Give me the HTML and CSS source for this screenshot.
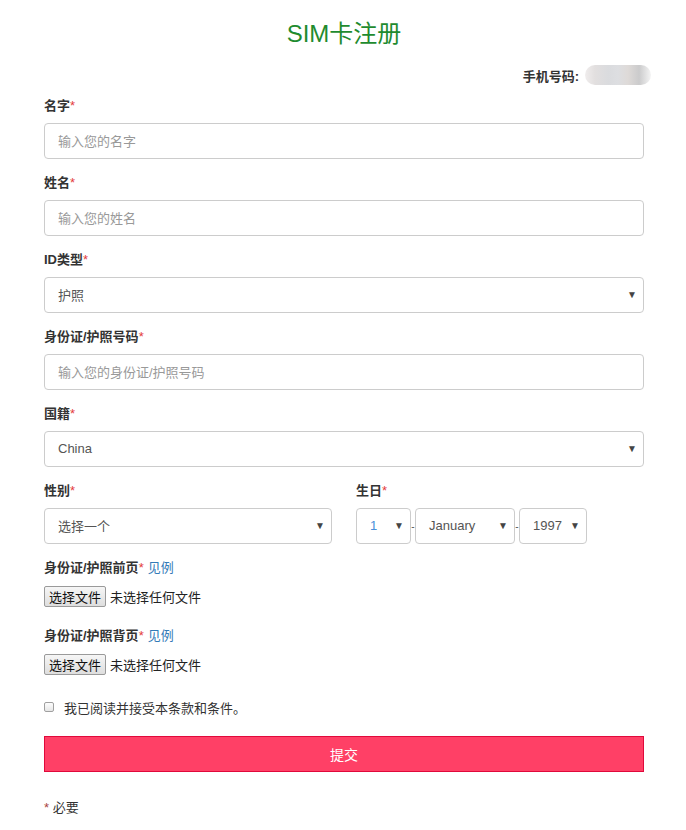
FILE: index.html
```html
<!DOCTYPE html>
<html lang="zh-CN">
<head>
<meta charset="utf-8">
<title>SIM卡注册</title>
<link rel="stylesheet" href="styles.css">
</head>
<body>
<div class="page">
  <h1 class="title">SIM卡注册</h1>
  <div class="phone-row">
    <span class="phone-label">手机号码:</span>
    <span class="phone-blur"></span>
  </div>

  <div class="group">
    <div class="label">名字<span class="req">*</span></div>
    <div class="input placeholder">输入您的名字</div>
  </div>
  <div class="group">
    <div class="label">姓名<span class="req">*</span></div>
    <div class="input placeholder">输入您的姓名</div>
  </div>
  <div class="group">
    <div class="label">ID类型<span class="req">*</span></div>
    <div class="input select"><span>护照</span><span class="arrow">▼</span></div>
  </div>
  <div class="group">
    <div class="label">身份证/护照号码<span class="req">*</span></div>
    <div class="input placeholder">输入您的身份证/护照号码</div>
  </div>
  <div class="group">
    <div class="label">国籍<span class="req">*</span></div>
    <div class="input select"><span>China</span><span class="arrow">▼</span></div>
  </div>
  <div class="group two-col">
    <div>
      <div class="label">性别<span class="req">*</span></div>
      <div class="input select"><span>选择一个</span><span class="arrow">▼</span></div>
    </div>
    <div>
      <div class="label">生日<span class="req">*</span></div>
      <div class="dob">
        <div class="input select day"><span class="day-val">1</span><span class="arrow">▼</span></div>
        <span class="dash">-</span>
        <div class="input select month"><span>January</span><span class="arrow">▼</span></div>
        <span class="dash">-</span>
        <div class="input select year"><span>1997</span><span class="arrow">▼</span></div>
      </div>
    </div>
  </div>
  <div class="group file-group">
    <div class="label">身份证/护照前页<span class="req">*</span><a class="example">见例</a></div>
    <div class="file"><span class="file-btn">选择文件</span><span class="file-text">未选择任何文件</span></div>
  </div>
  <div class="group file-group">
    <div class="label">身份证/护照背页<span class="req">*</span><a class="example">见例</a></div>
    <div class="file"><span class="file-btn">选择文件</span><span class="file-text">未选择任何文件</span></div>
  </div>
  <div class="agree">
    <span class="checkbox"></span>
    <span>我已阅读并接受本条款和条件。</span>
  </div>
  <div class="submit">提交</div>
  <div class="footnote"><span class="req-note">*</span> 必要</div>
</div>
</body>
</html>
```

FILE: styles.css
```css
* { box-sizing: border-box; }
body {
  margin: 0;
  font-family: "Liberation Sans", "Noto Sans CJK SC", sans-serif;
  font-size: 13px;
  color: #333;
  background: #fff;
}
.page {
  width: 600px;
  margin-left: 44px;
}
.title {
  margin: 20px 0 0;
  font-size: 24px;
  line-height: 28px;
  font-weight: normal;
  text-align: center;
  color: #1f8b2f;
}
.phone-row {
  display: flex;
  justify-content: flex-end;
  align-items: center;
  gap: 6px;
  margin-top: 17px;
  margin-right: -7px;
  height: 20px;
}
.phone-label {
  font-weight: bold;
  color: #333;
}
.phone-blur {
  width: 66px;
  height: 20px;
  border-radius: 10px;
  background: linear-gradient(90deg, #f0eded 0%, #e2dfdf 15%, #dadbde 35%, #dddee1 50%, #dedad8 65%, #cbcbcc 82%, #f4f4f4 100%);
  filter: blur(0.6px);
}
.group {
  margin-top: 12px;
}
.group + .group { margin-top: 15px; }
.label {
  font-weight: bold;
  line-height: 18px;
  height: 18px;
  margin-bottom: 8px;
}
.req {
  color: #e43b3b;
  font-weight: normal;
}
.input {
  height: 36px;
  border: 1px solid #ccc;
  border-radius: 4px;
  padding: 0 13px 1px;
  display: flex;
  align-items: center;
  color: #555;
  background: #fff;
}
.placeholder { color: #999; }
.select {
  justify-content: space-between;
  padding-right: 6px;
}
.arrow {
  font-size: 10px;
  color: #444;
}
.two-col {
  display: grid;
  grid-template-columns: 1fr 1fr;
  column-gap: 24px;
}
.dob {
  display: flex;
  align-items: center;
}
.day { width: 55px; }
.month { width: 100px; }
.year { width: 68px; }
.day-val { color: #4a90d9; }
.dash {
  width: 4px;
  text-align: center;
  font-size: 10px;
  color: #555;
}
.file-group .label { margin-bottom: 9px; }
.example {
  color: #337ab7;
  font-weight: normal;
  margin-left: 4px;
}
.file {
  display: flex;
  align-items: center;
  height: 21px;
}
.file-btn {
  display: inline-flex;
  align-items: center;
  height: 21px;
  padding: 0 4px;
  border: 1px solid #9a9a9a;
  border-radius: 2px;
  background: linear-gradient(#f6f6f6, #dedede);
  color: #111;
}
.file-text {
  margin-left: 4px;
  color: #222;
}
.file-group + .file-group { margin-top: 20px; }
.agree {
  display: flex;
  align-items: center;
  margin-top: 23px;
  height: 18px;
  color: #333;
}
.checkbox {
  width: 10px;
  height: 10px;
  border: 1px solid #a0a0a0;
  border-radius: 2px;
  background: linear-gradient(#fdfdfd, #e6e6e6);
  margin-right: 10px;
}
.submit {
  margin-top: 20px;
  height: 36px;
  border: 1px solid #e0093b;
  background: #ff4066;
  color: #fff;
  font-size: 14px;
  display: flex;
  align-items: center;
  justify-content: center;
}
.footnote {
  margin-top: 27px;
  line-height: 18px;
  color: #333;
}
.req-note { color: #a94442; }
```
